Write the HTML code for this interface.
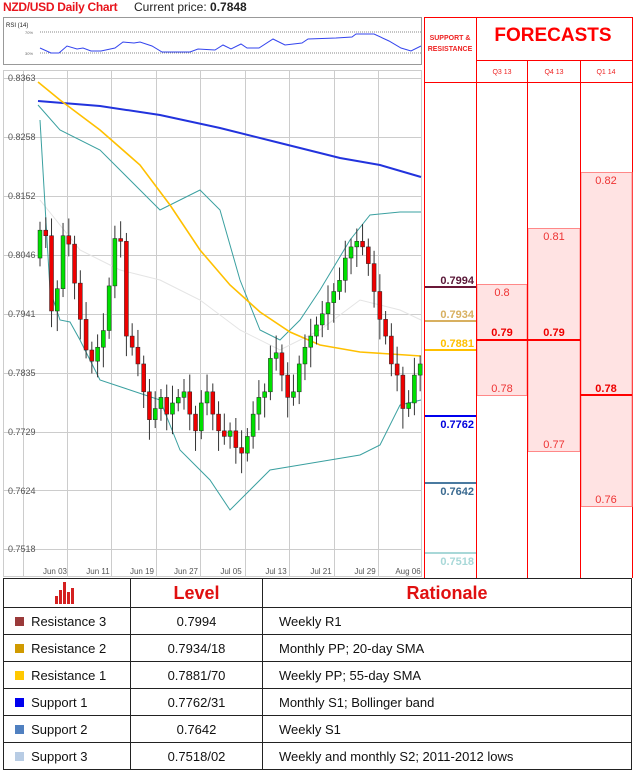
<!DOCTYPE html>
<html><head><meta charset="utf-8"><style>
body{margin:0;width:633px;height:773px;background:#fff;position:relative;overflow:hidden;font-family:"Liberation Sans",sans-serif}
.a{position:absolute}
table{border-collapse:collapse;position:absolute;left:3px;top:578px;width:629px;font-size:13px;color:#111}
td{border:1px solid #222;height:26px;padding:0}
</style></head><body>
<div class="a" style="left:3px;top:0;font-size:12px;font-weight:bold;color:#e8141c;letter-spacing:-0.3px">NZD/USD Daily Chart</div>
<div class="a" style="left:134px;top:0;font-size:12px;color:#222">Current price: <b>0.7848</b></div>
<svg class="a" style="left:0;top:0" width="633" height="578" id="s">
<rect x="3.5" y="17.5" width="418" height="47" fill="#fff" stroke="#999"/>
<text x="6" y="27" font-size="6" font-family="Liberation Sans" fill="#222">RSI (14)</text>
<line x1="40" y1="32" x2="421" y2="32" stroke="#888" stroke-dasharray="1,1"/>
<line x1="40" y1="53" x2="421" y2="53" stroke="#888" stroke-dasharray="1,1"/>
<text x="25" y="34" font-size="4" fill="#666">70%</text><text x="25" y="55" font-size="4" fill="#666">30%</text>
<polyline fill="none" stroke="#3344ee" stroke-width="1" points="40,48 51,53 59,53 67,46 77,49 83,48 91,51 101,51 115,48 123,42 134,43 140,42 152,46 162,52 178,52 190,52 198,49 215,50 223,45 231,49 241,44 247,48 259,48 273,39 285,45 302,43 308,39 336,38 352,37 356,34 374,34 389,41 401,48 411,51 421,46"/>
<rect x="3.5" y="70.5" width="418" height="506" fill="#fff" stroke="#ccc"/>
<g stroke="#ccc" id="grid"></g>
<g font-size="9" fill="#555" font-family="Liberation Sans">
<text x="8" y="81">0.8363</text><text x="8" y="140">0.8258</text><text x="8" y="199">0.8152</text><text x="8" y="258">0.8046</text><text x="8" y="317">0.7941</text><text x="8" y="376">0.7835</text><text x="8" y="435">0.7729</text><text x="8" y="494">0.7624</text><text x="8" y="552">0.7518</text>
</g>
<g font-size="8" fill="#555" font-family="Liberation Sans" text-anchor="middle">
<text x="55" y="574">Jun 03</text><text x="98" y="574">Jun 11</text><text x="142" y="574">Jun 19</text><text x="186" y="574">Jun 27</text><text x="231" y="574">Jul 05</text><text x="276" y="574">Jul 13</text><text x="321" y="574">Jul 21</text><text x="365" y="574">Jul 29</text><text x="408" y="574">Aug 06</text>
</g>
<polyline fill="none" stroke="#e4e4e4" points="40,200 80,250 120,270 160,280 200,300 240,330 280,350 320,330 360,300 400,310 421,320"/>
<polyline fill="none" stroke="#3aa0a0" points="38,105 60,130 100,150 140,190 160,210 180,200 200,190 220,210 240,280 260,330 280,340 300,320 320,290 350,240 370,215 400,212 421,212"/>
<polyline fill="none" stroke="#3aa0a0" points="40,120 50,290 60,320 70,322 80,340 100,380 130,390 160,400 180,450 210,480 230,510 250,490 270,470 300,465 330,460 360,455 380,445 400,405 421,400"/>
<polyline fill="none" stroke="#2233dd" stroke-width="2" points="38,101 100,106 160,115 220,128 280,143 340,158 380,165 421,177"/>
<polyline fill="none" stroke="#ffc000" stroke-width="1.6" points="38,82 60,100 100,130 140,165 170,205 200,250 230,285 260,312 290,332 320,345 360,352 421,356"/>
<g id="c"></g>
<g stroke="#f00" fill="none"><line x1="424.5" y1="17" x2="424.5" y2="578"/><line x1="476.5" y1="17" x2="476.5" y2="578"/><line x1="527.5" y1="60" x2="527.5" y2="578"/><line x1="580.5" y1="60" x2="580.5" y2="578"/><line x1="632.5" y1="17" x2="632.5" y2="578"/><line x1="424" y1="17.5" x2="633" y2="17.5"/><line x1="476" y1="60.5" x2="633" y2="60.5"/><line x1="424" y1="82.5" x2="633" y2="82.5"/></g>
<text x="450" y="40" font-size="7" font-weight="bold" fill="#e22" text-anchor="middle">SUPPORT &amp;</text>
<text x="450" y="51" font-size="7" font-weight="bold" fill="#e22" text-anchor="middle">RESISTANCE</text>
<text x="553" y="41" font-size="19" font-weight="bold" fill="#f00" text-anchor="middle">FORECASTS</text>
<g font-size="7" fill="#e22" text-anchor="middle"><text x="502" y="74">Q3 13</text><text x="554" y="74">Q4 13</text><text x="606" y="74">Q1 14</text></g>
<rect x="477" y="284.5" width="50" height="111" fill="#ffe3e3" stroke="#f88"/>
<rect x="528" y="228.5" width="52" height="223" fill="#ffe3e3" stroke="#f88"/>
<rect x="581" y="172.5" width="51" height="334" fill="#ffe3e3" stroke="#f88"/>
<line x1="477" y1="340" x2="580" y2="340" stroke="#f00" stroke-width="2"/>
<line x1="581" y1="395" x2="632" y2="395" stroke="#f00" stroke-width="2"/>
<g stroke="#f00"><line x1="476.5" y1="17" x2="476.5" y2="578"/><line x1="527.5" y1="60" x2="527.5" y2="578"/><line x1="580.5" y1="60" x2="580.5" y2="578"/></g>
<g font-size="11" fill="#e33" text-anchor="middle"><text x="502" y="296">0.8</text><text x="502" y="392">0.78</text><text x="554" y="240">0.81</text><text x="554" y="448">0.77</text><text x="606" y="184">0.82</text><text x="606" y="503">0.76</text></g>
<g font-size="11" font-weight="bold" fill="#e00" text-anchor="middle"><text x="502" y="336">0.79</text><text x="554" y="336">0.79</text><text x="606" y="392">0.78</text></g>
<g stroke-width="2"><line x1="425" y1="287" x2="476" y2="287" stroke="#6a1838"/><line x1="425" y1="321" x2="476" y2="321" stroke="#d8b060"/><line x1="425" y1="350" x2="476" y2="350" stroke="#ffc000"/><line x1="425" y1="416" x2="476" y2="416" stroke="#0000ee"/><line x1="425" y1="483" x2="476" y2="483" stroke="#4a7aa0"/><line x1="425" y1="553" x2="476" y2="553" stroke="#a8d8d8"/></g>
<g font-size="11" font-weight="bold" text-anchor="end"><text x="474" y="284" fill="#5a1838">0.7994</text><text x="474" y="318" fill="#d8b060">0.7934</text><text x="474" y="347" fill="#ffc000">0.7881</text><text x="474" y="428" fill="#0000dd">0.7762</text><text x="474" y="495" fill="#3a6a90">0.7642</text><text x="474" y="565" fill="#a8d8d8">0.7518</text></g>
</svg>
<table>
<tr style="height:29px"><td style="width:126px;text-align:center"><svg width="26" height="24" viewBox="0 0 26 24"><g fill="#d42020"><rect x="1" y="16" width="3" height="8"/><rect x="5" y="10" width="3" height="14"/><rect x="9" y="2" width="3" height="22"/><rect x="13" y="12" width="3" height="12"/><rect x="17" y="8" width="3" height="16"/></g></svg></td><td style="width:131px;text-align:center;font-size:18px;font-weight:bold;color:#e01010">Level</td><td style="text-align:center;font-size:18px;font-weight:bold;color:#e01010">Rationale</td></tr>
<tr><td>&nbsp;&nbsp;&nbsp;<span style="display:inline-block;width:9px;height:9px;background:#9a3a3a"></span>&nbsp; Resistance 3</td><td style="text-align:center">0.7994</td><td style="padding-left:16px">Weekly R1</td></tr>
<tr><td>&nbsp;&nbsp;&nbsp;<span style="display:inline-block;width:9px;height:9px;background:#d09a00"></span>&nbsp; Resistance 2</td><td style="text-align:center">0.7934/18</td><td style="padding-left:16px">Monthly PP; 20-day SMA</td></tr>
<tr><td>&nbsp;&nbsp;&nbsp;<span style="display:inline-block;width:9px;height:9px;background:#ffc800"></span>&nbsp; Resistance 1</td><td style="text-align:center">0.7881/70</td><td style="padding-left:16px">Weekly PP; 55-day SMA</td></tr>
<tr><td>&nbsp;&nbsp;&nbsp;<span style="display:inline-block;width:9px;height:9px;background:#0000ee"></span>&nbsp; Support 1</td><td style="text-align:center">0.7762/31</td><td style="padding-left:16px">Monthly S1; Bollinger band</td></tr>
<tr><td>&nbsp;&nbsp;&nbsp;<span style="display:inline-block;width:9px;height:9px;background:#5080c0"></span>&nbsp; Support 2</td><td style="text-align:center">0.7642</td><td style="padding-left:16px">Weekly S1</td></tr>
<tr><td>&nbsp;&nbsp;&nbsp;<span style="display:inline-block;width:9px;height:9px;background:#b8cce4"></span>&nbsp; Support 3</td><td style="text-align:center">0.7518/02</td><td style="padding-left:16px">Weekly and monthly S2; 2011-2012 lows</td></tr>
</table>
<script>
var ns="http://www.w3.org/2000/svg",g=document.getElementById('grid'),c=document.getElementById('c');
function el(t,a,p){var e=document.createElementNS(ns,t);for(var k in a)e.setAttribute(k,a[k]);p.appendChild(e);return e}
[78,137,196,255,314,373,432,490,549].forEach(function(y){el('line',{x1:4,x2:421,y1:y+.5,y2:y+.5},g)});
[23,67,111,156,200,245,289,334,378].forEach(function(x){el('line',{x1:x+.5,x2:x+.5,y1:71,y2:576},g)});
var Y=function(p){return 78+(0.8363-p)*5574};
var cl=[.8090,.8080,.7945,.7985,.8080,.8065,.7995,.7930,.7875,.7855,.7880,.7910,.7990,.8075,.8070,.7900,.7880,.7850,.7800,.7750,.7770,.7790,.7760,.7780,.7790,.7800,.7760,.7730,.7780,.7800,.7760,.7730,.7720,.7730,.7700,.7690,.7720,.7760,.7790,.7800,.7860,.7870,.7830,.7790,.7800,.7850,.7880,.7900,.7920,.7940,.7960,.7980,.8000,.8040,.8060,.8070,.8060,.8030,.7980,.7930,.7900,.7850,.7830,.7770,.7780,.7830,.7850];
var o=.8040;
cl.forEach(function(v,i){var x=38+i*5.76,hi=Math.max(o,v)+.0015+(i%3)*.0008,lo=Math.min(o,v)-.0015-(i%4)*.0007;
el('line',{x1:x+2,x2:x+2,y1:Y(hi),y2:Y(lo),stroke:'#333'},c);
var t=Y(Math.max(o,v)),b=Y(Math.min(o,v));el('rect',{x:x,y:t,width:4,height:Math.max(1.5,b-t),fill:v>=o?'#00e000':'#ee0000',stroke:'#222','stroke-width':.5},c);o=v;});
</script>
</body></html>
